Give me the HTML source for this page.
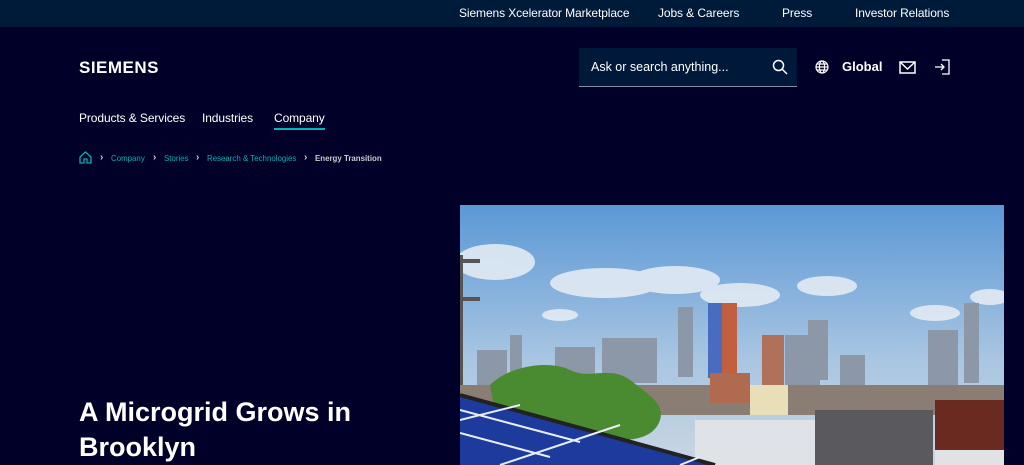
<!DOCTYPE html>
<html><head><meta charset="utf-8"><style>
*{margin:0;padding:0;box-sizing:border-box}
body{width:1024px;height:465px;overflow:hidden;background:#000028;font-family:"Liberation Sans",sans-serif;color:#fff;position:relative}
.top{position:absolute;left:0;top:0;width:1024px;height:27px;background:#001a3a;font-size:12px;letter-spacing:-0.1px}
.top span{position:absolute;top:6px}
.logo{position:absolute;left:79px;top:58px;font-weight:bold;font-size:17px;letter-spacing:0.5px}
.search{position:absolute;left:579px;top:48px;width:218px;height:39px;background:#00183a;border-bottom:1px solid #8a8fa0;font-size:12.5px;padding:12px 0 0 12px}
.nav{position:absolute;top:111px;font-size:12px;letter-spacing:-0.1px}
.bc{position:absolute;top:154px;font-size:7.9px;color:#00b0b0}
.ch{position:absolute;top:152px;font-size:10px;color:#ccc;font-weight:bold}
h1{position:absolute;left:79px;top:395px;font-size:27px;line-height:35px;font-weight:bold}
</style></head><body>
<div class="top"><span style="left:459px">Siemens Xcelerator Marketplace</span><span style="left:658px">Jobs &amp; Careers</span><span style="left:782px">Press</span><span style="left:855px">Investor Relations</span></div>
<div class="logo">SIEMENS</div>
<div class="search">Ask or search anything...
<svg style="position:absolute;left:193px;top:11px" width="16" height="16" viewBox="0 0 16 16" fill="none" stroke="#fff" stroke-width="1.5"><circle cx="6.5" cy="6.5" r="5"/><path d="M10.5 10.5L15 15"/></svg></div>
<svg style="position:absolute;left:815px;top:60px" width="14" height="14" viewBox="0 0 14 14" fill="none" stroke="#fff" stroke-width="1.2"><circle cx="7" cy="7" r="6"/><ellipse cx="7" cy="7" rx="2.6" ry="6"/><path d="M1 7h12M2 4h10M2 10h10"/></svg>
<div style="position:absolute;left:842px;top:59px;font-size:13px;font-weight:bold">Global</div>
<svg style="position:absolute;left:899px;top:61px" width="17" height="13" viewBox="0 0 17 13" fill="none" stroke="#fff" stroke-width="1.5"><rect x="1" y="1" width="15" height="11"/><path d="M1 1l7.5 7L16 1"/></svg>
<svg style="position:absolute;left:934px;top:59px" width="16" height="16" viewBox="0 0 16 16" fill="none" stroke="#fff" stroke-width="1.3"><path d="M8 1h7v14H8M1 8h9M7 5l3 3-3 3"/></svg>
<div class="nav" style="left:79px">Products &amp; Services</div>
<div class="nav" style="left:202px">Industries</div>
<div class="nav" style="left:274px">Company</div>
<div style="position:absolute;left:274px;top:128px;width:51px;height:1.5px;background:#00b5b5"></div>
<svg style="position:absolute;left:79px;top:151px" width="13" height="13" viewBox="0 0 13 13" fill="none" stroke="#00b0b0" stroke-width="1.3"><path d="M1 6L6.5 1 12 6v6H8V8H5v4H1z"/></svg>
<div class="ch" style="left:100px">›</div><div class="bc" style="left:111px">Company</div>
<div class="ch" style="left:153px">›</div><div class="bc" style="left:164px">Stories</div>
<div class="ch" style="left:196px">›</div><div class="bc" style="left:207px">Research &amp; Technologies</div>
<div class="ch" style="left:304px">›</div><div class="bc" style="left:315px;color:#ccc;font-weight:bold">Energy Transition</div>
<h1>A Microgrid Grows in<br>Brooklyn</h1>
<svg style="position:absolute;left:460px;top:205px" width="544" height="260" viewBox="0 0 544 260">
<defs><linearGradient id="s" x1="0" y1="0" x2="0" y2="1"><stop offset="0" stop-color="#5b98d6"/><stop offset="0.6" stop-color="#a9c6e2"/><stop offset="1" stop-color="#c9d6e2"/></linearGradient></defs>
<rect width="544" height="260" fill="url(#s)"/>
<g fill="#e8eef5" opacity="0.85"><ellipse cx="35" cy="57" rx="40" ry="18"/><ellipse cx="145" cy="78" rx="55" ry="15"/><ellipse cx="215" cy="75" rx="45" ry="14"/><ellipse cx="280" cy="90" rx="40" ry="12"/><ellipse cx="367" cy="81" rx="30" ry="10"/><ellipse cx="100" cy="110" rx="18" ry="6"/><ellipse cx="530" cy="92" rx="20" ry="8"/><ellipse cx="475" cy="108" rx="25" ry="8"/></g>
<g fill="#8c98a8"><rect x="218" y="102" width="15" height="70"/><rect x="348" y="115" width="20" height="60"/><rect x="504" y="98" width="15" height="80"/><rect x="468" y="125" width="30" height="55"/><rect x="50" y="130" width="12" height="50"/><rect x="142" y="133" width="55" height="45"/><rect x="17" y="145" width="30" height="40"/><rect x="95" y="142" width="40" height="40"/><rect x="325" y="130" width="35" height="50"/><rect x="380" y="150" width="25" height="30"/></g>
<rect x="248" y="98" width="28" height="75" fill="#4a6cc0"/><rect x="262" y="98" width="15" height="75" fill="#c06040"/>
<rect x="302" y="130" width="22" height="50" fill="#b0705a"/>
<rect x="0" y="180" width="544" height="30" fill="#8a7e74"/>
<rect x="250" y="168" width="40" height="30" fill="#b06a50"/>
<rect x="290" y="180" width="38" height="30" fill="#e8dfb8"/>
<path d="M30 180c20-20 60-25 80-15s40-5 60 10 35 25 30 40-20 20-40 20H40z" fill="#4a8a30"/>
<rect x="235" y="215" width="120" height="45" fill="#dfe2e6"/>
<rect x="355" y="205" width="118" height="55" fill="#5a5a5e"/>
<rect x="475" y="195" width="69" height="50" fill="#6a2a20"/>
<rect x="475" y="245" width="69" height="15" fill="#e0e2e4"/>
<rect x="0" y="50" width="3" height="130" fill="#555"/>
<rect x="0" y="54" width="20" height="4" fill="#555"/><rect x="0" y="92" width="20" height="4" fill="#555"/>
<path d="M0 190L255 260H0z" fill="#1d3b9c"/>
<path d="M0 190L255 260" stroke="#222" stroke-width="4"/>
<g stroke="#e8eef8" stroke-width="2" fill="none"><path d="M0 205L120 237M0 228L90 252M60 200L0 215M160 220L40 260M240 252L220 260"/></g>
</svg>
</body></html>
